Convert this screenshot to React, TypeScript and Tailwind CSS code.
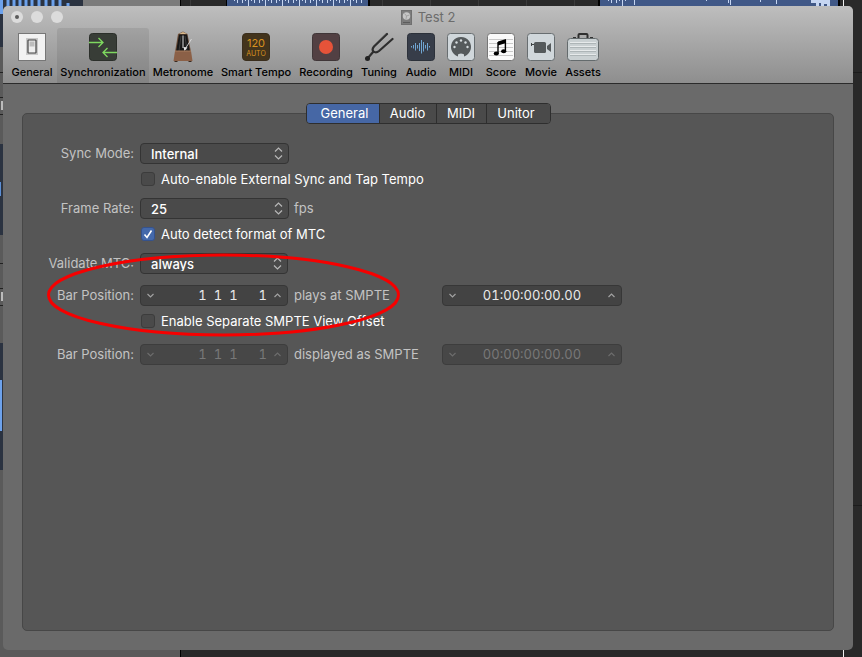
import React, { useState } from "react";

const INK = "#3f4445";

function GeneralIcon() {
  return (
    <svg width="28" height="28" viewBox="0 0 28 28">
      <rect x="0.5" y="0.5" width="27" height="27" fill="#f2f2f2" stroke="#777" />
      <rect x="8" y="5" width="12" height="17" fill="#c9c9c9" />
      <rect x="10" y="7" width="8" height="13" rx="0.5" fill="#eee" stroke="#444" strokeWidth="1.2" />
      <rect x="11.500" y="8.500" width="5" height="5" fill="#bdbdbd" />
    </svg>
  );
}

function SyncIcon() {
  return (
    <svg width="28" height="28" viewBox="0 0 28 28">
      <rect x="0.5" y="0.5" width="27" height="27" rx="3" fill="#383d37" stroke="#2b2f2a" />
      <g fill="none" stroke="#7ed85f" strokeWidth="1.3">
        <path d="M0 9.500H14M9.500 5L14 9.500L9.500 14" />
        <path d="M28 19.500H14M18.500 15L14 19.500L18.500 24" />
      </g>
    </svg>
  );
}

function MetronomeIcon() {
  return (
    <svg width="28" height="32" viewBox="0 0 28 32">
      <path d="M9 3L14 0.500L18.500 3L22 21H6Z" fill="#6d4f3b" />
      <path d="M10 3.500H18L21 21H7Z" fill="#171717" />
      <path d="M10 3L14 1L18 3Z" fill="#d9b98c" />
      <path d="M12 5L10 20M16 5L18 20" stroke="#444" strokeWidth="0.8" />
      <path d="M14 4.500V17" stroke="#ddd" strokeWidth="1" />
      <path d="M15.500 19L22.500 8" stroke="#ddd" strokeWidth="0.9" />
      <path d="M14.500 16L18.500 16.500L15.500 20Z" fill="#e8e8e8" />
      <path d="M6 20H22L23.500 30H4.500Z" fill="#8b6047" />
      <path d="M6 20H22" stroke="#a87c5e" />
      <path d="M5.500 30H8.500V31H5.500ZM19.500 30H22.500V31H19.500Z" fill="#3a2a20" />
    </svg>
  );
}

function SmartTempoIcon() {
  return (
    <span className="flex size-7 flex-col items-center justify-center rounded-[4px] border border-[#3a2e1d] bg-[#43341c] font-normal text-[#d8921f]">
      <span className="text-[11px] leading-[12px]">120</span>
      <span className="text-[7px] leading-[9px]">AUTO</span>
    </span>
  );
}

function RecordingIcon() {
  return (
    <svg width="28" height="28" viewBox="0 0 28 28">
      <rect x="0.5" y="0.5" width="27" height="27" rx="3" fill="#524043" stroke="#403638" />
      <circle cx="14" cy="14" r="7" fill="#e65339" />
    </svg>
  );
}

function TuningIcon() {
  return (
    <svg width="30" height="30" viewBox="0 0 30 30">
      <g fill="none" stroke="#2e2e2e" strokeWidth="2.2" strokeLinecap="round">
        <path d="M23 2L10 14.500Q7.500 17.500 9.500 19.500Q12 21.500 15 19L28.500 7" />
        <path d="M9.500 19.500L3.500 26.500" />
      </g>
      <circle cx="3.500" cy="26.500" r="2.500" fill="#222" />
      <path d="M22 1.500L10 13" stroke="#666" strokeWidth="0.6" />
    </svg>
  );
}

function AudioIcon() {
  return (
    <svg width="28" height="28" viewBox="0 0 28 28">
      <rect x="0.5" y="0.5" width="27" height="27" rx="3" fill="#373d49" stroke="#2c313a" />
      <path
        d="M4.500 13V14.500M6.500 12V15.500M8.500 10V17.500M10.500 12V15.500M12.500 10V18M14.500 7V20.500M16.500 9V18.500M18.500 12V15.500M20.500 10V17.500M22.500 13V14.500"
        stroke="#70a5d2"
      />
    </svg>
  );
}

function Plate({ children }: { children: React.ReactNode }) {
  return (
    <svg width="28" height="28" viewBox="0 0 28 28">
      <rect x="0.5" y="0.5" width="27" height="27" rx="3" fill="#d0d7db" stroke="#686e71" />
      {children}
    </svg>
  );
}

function MidiIcon() {
  return (
    <Plate>
      <path d="M11 23.500A10 10 0 1 1 17 23.500V22Q17 20.500 14 20.500Q11 20.500 11 22Z" fill={INK} fillOpacity="0.85" />
      {[[7.5, 14], [9.5, 9.5], [14, 7.5], [18.5, 9.5], [20.5, 14]].map(([x, y]) => (
        <circle key={x} cx={x} cy={y} r="1.2" fill="#d6dcdf" />
      ))}
    </Plate>
  );
}

function ScoreIcon() {
  return (
    <svg width="28" height="28" viewBox="0 0 28 28">
      <rect x="0.5" y="0.5" width="27" height="27" rx="3" fill="#fafafa" stroke="#777" />
      <path d="M2 6.500H26M2 10.500H26M2 14.500H26M2 18.500H26M2 22.500H26" stroke="#c9c9c9" />
      <path d="M11 8.500L19 6V10L11 12.500Z" fill="#000" />
      <path d="M11 9V20.500M18.400 7V18" stroke="#000" strokeWidth="1.4" />
      <ellipse cx="9.3" cy="20.5" rx="2.6" ry="2" fill="#000" />
      <ellipse cx="16.7" cy="18.2" rx="2.6" ry="2" fill="#000" />
    </svg>
  );
}

function MovieIcon() {
  return (
    <Plate>
      <rect x="7" y="9" width="12" height="11" rx="1.5" fill={INK} fillOpacity="0.85" />
      <path d="M20 13L24 10V19L20 16Z" fill={INK} fillOpacity="0.85" />
      <path d="M4.500 10V13M5 11.500H7" stroke={INK} />
    </Plate>
  );
}

function AssetsIcon() {
  return (
    <svg width="32" height="28" viewBox="0 0 32 28">
      <path d="M11.500 5V2Q11.500 1 12.500 1H19.500Q20.500 1 20.500 2V5" fill="none" stroke="#2f2f2f" strokeWidth="2" />
      <path d="M6 4.500H9M23 4.500H26" stroke="#333" />
      <rect x="0.5" y="5.5" width="31" height="22" rx="3" fill="#c9d0d2" stroke="#646b6d" />
      <path d="M3 10.500H29M3 14.500H29M3 18.500H29M3 22.500H29" stroke="#adb5b7" />
      <path d="M3 9.500H29M3 13.500H29M3 17.500H29M3 21.500H29" stroke="#e6eaeb" />
    </svg>
  );
}

const TOOLS: { name: string; width: string; icon: React.ReactNode }[] = [
  { name: "General", width: "w-[50px]", icon: <GeneralIcon /> },
  { name: "Synchronization", width: "w-[92px]", icon: <SyncIcon /> },
  { name: "Metronome", width: "w-[68px]", icon: <MetronomeIcon /> },
  { name: "Smart Tempo", width: "w-[78px]", icon: <SmartTempoIcon /> },
  { name: "Recording", width: "w-[62px]", icon: <RecordingIcon /> },
  { name: "Tuning", width: "w-[44px]", icon: <TuningIcon /> },
  { name: "Audio", width: "w-[40px]", icon: <AudioIcon /> },
  { name: "MIDI", width: "w-[40px]", icon: <MidiIcon /> },
  { name: "Score", width: "w-[40px]", icon: <ScoreIcon /> },
  { name: "Movie", width: "w-[40px]", icon: <MovieIcon /> },
  { name: "Assets", width: "w-[44px]", icon: <AssetsIcon /> },
];

function Backdrop() {
  const wave = (from: number, to: number) => {
    let d = "";
    for (let x = from; x < to; x += 1) {
      const h = ((x * x * 7 + x * 13) % 17) - 8;
      if (h > 0) d += `M${x + 0.5} 0V${Math.min(h, 6)}`;
    }
    return d;
  };
  return (
    <svg className="absolute inset-0 h-full w-full" aria-hidden="true">
      <rect width="100%" height="100%" fill="#292929" />
      <rect width="180" height="100%" fill="#5a5a5a" />
      <rect x="83" width="97" height="7" fill="#7b7b7b" />
      <rect width="83" height="47" fill="#2b3341" />
      <path d="M1.500 0V14M8 0V6M14 0V6M20 0V6M26 0V6M32 0V6M39 0V6M46 0V6M53 0V6M60 0V6M68 3V6" stroke="#6da2ec" strokeWidth="3" />
      <rect x="180" width="1" height="100%" fill="#000" />
      <path d="M190.500 0V6M382.500 0V6M430.500 0V6M478.500 0V6M526.500 0V6M574.500 0V6" stroke="#3a3a3a" />
      <rect x="226" width="144" height="7" fill="#000" />
      <rect x="227" width="141" height="7" fill="#405887" />
      <path d={wave(234, 364)} stroke="#c6d6f2" />
      <rect x="598" width="242" height="7" fill="#000" />
      <rect x="600" width="238" height="7" fill="#405887" />
      <path d={wave(607, 627) + "M634.500 0V5M706.500 0V1M728.500 0V3M730.500 0V5M760.500 0V2M776.500 0V4"} stroke="#c6d6f2" />
      <path d="M811 0H830V6H827V4H824V6H821V3H819V6H816V3H811Z" fill="#c6d6f2" />
      <rect x="843" width="1" height="100%" fill="#f0f0f0" />
      <path d="M853 72.500H862M853 505.500H862" stroke="#1c1c1c" />
      <path d="M0 72.500H3M0 97.500H3M0 114.500H3M0 263.500H3M0 288.500H3M0 305.500H3" stroke="#222" />
      <path d="M2 101V110M2 292V301" stroke="#bbb" strokeWidth="2" />
      <rect y="144" width="3" height="91" fill="#2b3341" />
      <rect y="182" width="1" height="14" fill="#5b8fd6" />
      <rect y="343" width="3" height="127" fill="#2b3341" />
      <rect y="380" width="2" height="51" fill="#6da2ec" />
    </svg>
  );
}

function Popup({ id, options, width }: { id: string; options: string[]; width: string }) {
  return (
    <span className={`relative ${width}`}>
      <select
        id={id}
        className="block h-[21px] w-full appearance-none rounded-[4px] border border-[#343434] bg-[#4a4a4a] pb-[2px] pl-[10px] font-medium text-white"
      >
        {options.map((o) => (
          <option key={o}>{o}</option>
        ))}
      </select>
      <svg className="pointer-events-none absolute top-1 right-[6px]" width="9" height="13" viewBox="0 0 9 13">
        <path d="M1 4.500L4.500 1L8 4.500M1 8.500L4.500 12L8 8.500" fill="none" stroke="#b8b8b8" strokeWidth="1.2" />
      </svg>
    </span>
  );
}

function Stepper({ label, value, width, align, disabled }: { label: string; value: string; width: string; align: string; disabled?: boolean }) {
  const [text, setText] = useState(value);
  return (
    <span
      className={`flex h-[21px] items-center rounded-[4px] border px-[6px] ${width} ${
        disabled ? "border-[#3d3d3d] bg-[#474747] text-[#787878]" : "border-[#373737] bg-[#434343] text-[#e9e9e9]"
      }`}
    >
      <button type="button" disabled={disabled} aria-label={`Decrease ${label}`}>
        <svg width="7" height="5" viewBox="0 0 7 5">
          <path d="M0.500 1L3.500 4L6.500 1" fill="none" stroke={disabled ? "#6c6c6c" : "#a2a2a2"} strokeWidth="1.2" />
        </svg>
      </button>
      <input
        aria-label={label}
        value={text}
        disabled={disabled}
        onChange={(e) => setText(e.target.value)}
        className={`min-w-0 flex-1 bg-transparent tabular-nums ${align}`}
      />
      <button type="button" disabled={disabled} aria-label={`Increase ${label}`}>
        <svg width="7" height="5" viewBox="0 0 7 5">
          <path d="M0.500 4L3.500 1L6.500 4" fill="none" stroke={disabled ? "#6c6c6c" : "#a2a2a2"} strokeWidth="1.2" />
        </svg>
      </button>
    </span>
  );
}

function Check({ label, defaultChecked }: { label: string; defaultChecked?: boolean }) {
  return (
    <label className="ml-[118px] flex h-5 items-center gap-[6px] text-white">
      <span className="relative size-[14px]">
        <input
          type="checkbox"
          defaultChecked={defaultChecked}
          className="peer block size-[14px] appearance-none rounded-[3px] border border-[#3c3c3c] bg-[#4a4a4a] checked:border-[#35528c] checked:bg-[#4469ab]"
        />
        <svg className="pointer-events-none absolute inset-0 hidden peer-checked:block" width="14" height="14" viewBox="0 0 14 14">
          <path d="M3.500 7.500L6 10.500L10.500 3.500" fill="none" stroke="#fff" strokeWidth="1.6" />
        </svg>
      </span>
      {label}
    </label>
  );
}

function Row({ label, htmlFor, children }: { label: string; htmlFor?: string; children: React.ReactNode }) {
  return (
    <div className="flex items-center text-[#c3c3c3]">
      <label htmlFor={htmlFor} className="mr-[6px] w-[111px] text-right">
        {label}
      </label>
      {children}
    </div>
  );
}

export default function App() {
  const [tool, setTool] = useState("Synchronization");
  const [tab, setTab] = useState("General");
  const tabs = [
    { name: "General", width: "w-[73px] pl-1" },
    { name: "Audio", width: "w-[57px]" },
    { name: "MIDI", width: "w-[50px]" },
    { name: "Unitor", width: "w-[63px] pr-1" },
  ];
  return (
    <div className="relative flex min-h-screen flex-col pt-[6px] pr-[9px] pb-[7px] pl-[3px] font-['Inter','Liberation_Sans',sans-serif] text-[13px] leading-[21px]">
      <Backdrop />
      <main className="relative flex flex-1 flex-col overflow-hidden rounded-[5px] bg-[#6a6a6a]">
        <header className="border-b border-[#2b2b2b] bg-linear-to-b from-[#bebebe] to-[#8e8e8e]">
          <div className="relative flex h-[22px] items-center justify-center gap-[6px] text-[#6c6c6c]">
            <div className="absolute left-2 flex gap-2">
              <button type="button" aria-label="Close" className="flex size-3 items-center justify-center rounded-full bg-[#dcdcdc]">
                <span className="size-1 rounded-full bg-[#5c5c5c]" />
              </button>
              <button type="button" aria-label="Minimize" className="size-3 rounded-full bg-[#dcdcdc]" />
              <button type="button" aria-label="Zoom" className="size-3 rounded-full bg-[#dcdcdc]" />
            </div>
            <svg width="11" height="15" viewBox="0 0 11 15">
              <rect x="0.5" y="0.5" width="10" height="14" fill="#7c7c7c" stroke="#707070" />
              <circle cx="5.5" cy="6" r="3.7" fill="#c6c6c6" />
              <path d="M5.500 6L3.500 3.500M5.500 6L8.500 5M5.500 6L5 9" stroke="#999" strokeWidth="0.8" />
              <path d="M2 12.500H9" stroke="#5c5c5c" />
            </svg>
            <h1>Test 2</h1>
          </div>
          <nav className="flex h-[55px] pl-1">
            {TOOLS.map((t) => (
              <button
                key={t.name}
                type="button"
                onClick={() => setTool(t.name)}
                className={`flex shrink-0 flex-col items-center rounded-t-[3px] pt-1 text-[11px] leading-[14px] font-medium whitespace-nowrap text-black ${t.width} ${
                  tool === t.name ? "bg-black/8" : ""
                }`}
              >
                <span className="flex h-[30px] items-center justify-center">{t.icon}</span>
                <span className="mt-[3px]">{t.name}</span>
              </button>
            ))}
          </nav>
        </header>
        <div className="flex flex-1 flex-col px-[19px] pt-[19px] pb-[19px]">
          <div className="z-10 mb-[-11px] flex h-[21px] self-center overflow-hidden rounded-[4px] border border-[#2e2e2e]">
            {tabs.map((t) => (
              <button
                key={t.name}
                type="button"
                onClick={() => setTab(t.name)}
                className={`border-r border-[#2e2e2e] leading-[19px] text-white last:border-r-0 ${t.width} ${
                  tab === t.name ? "bg-[#4667a5]" : "bg-[#4a4a4a]"
                }`}
              >
                {t.name}
              </button>
            ))}
          </div>
          <section className="relative flex-1 rounded-[5px] border border-[#474747] bg-[#565656] pt-[29px]">
            <Row label="Sync Mode:" htmlFor="sync-mode">
              <Popup id="sync-mode" width="w-[149px]" options={["Internal", "MTC", "Manual"]} />
            </Row>
            <div className="mt-[5px] mb-[9px]">
              <Check label="Auto-enable External Sync and Tap Tempo" />
            </div>
            <Row label="Frame Rate:" htmlFor="frame-rate">
              <Popup id="frame-rate" width="w-[149px]" options={["25", "24", "30"]} />
              <span className="ml-[5px]">fps</span>
            </Row>
            <div className="mt-[5px] mb-[9px]">
              <Check label="Auto detect format of MTC" defaultChecked />
            </div>
            <Row label="Validate MTC:" htmlFor="validate">
              <Popup id="validate" width="w-[148px]" options={["always", "once"]} />
            </Row>
            <div className="mt-[11px]">
              <Row label="Bar Position:">
                <Stepper label="Bar position played" value="1  1  1      1" width="w-[148px]" align="pr-[7px] text-right" />
                <span className="ml-[6px] w-[148px]">plays at SMPTE</span>
                <Stepper label="SMPTE start" value="01:00:00:00.00" width="w-[180px]" align="text-center" />
              </Row>
            </div>
            <div className="mt-[5px] mb-[13px]">
              <Check label="Enable Separate SMPTE View Offset" />
            </div>
            <Row label="Bar Position:">
              <Stepper label="Bar position displayed" value="1  1  1      1" width="w-[148px]" align="pr-[7px] text-right" disabled />
              <span className="ml-[6px] w-[148px]">displayed as SMPTE</span>
              <Stepper label="SMPTE view offset" value="00:00:00:00.00" width="w-[180px]" align="text-center" disabled />
            </Row>
            <svg className="pointer-events-none absolute top-[138px] left-[23px]" width="356" height="86" viewBox="0 0 356 86" aria-hidden="true">
              <ellipse cx="177.5" cy="43" rx="175" ry="40" fill="none" stroke="#f60000" strokeWidth="3" />
            </svg>
          </section>
        </div>
      </main>
    </div>
  );
}
